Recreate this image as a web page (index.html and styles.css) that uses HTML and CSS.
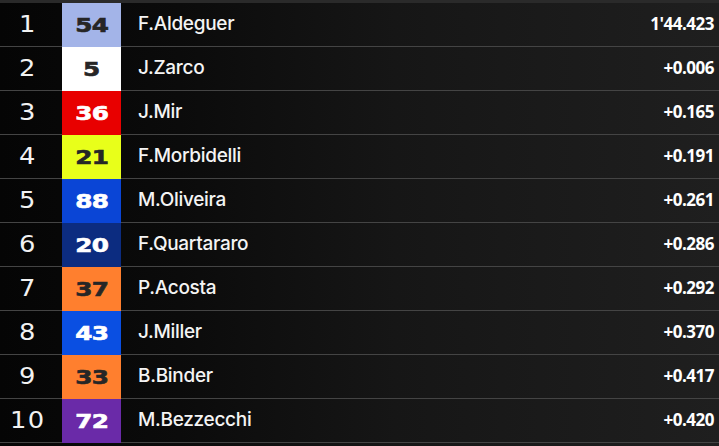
FILE: index.html
```html
<!DOCTYPE html>
<html>
<head>
<meta charset="utf-8">
<link rel="stylesheet" href="styles.css">
</head>
<body>
<div class="board">
  <div class="topbar"></div>
  <div class="row"><div class="pos"><span>1</span></div><div class="num c-lav"><span>54</span></div><div class="name">F.Aldeguer</div><div class="time">1'44.423</div></div>
  <div class="row"><div class="pos"><span>2</span></div><div class="num c-white"><span>5</span></div><div class="name">J.Zarco</div><div class="time">+0.006</div></div>
  <div class="row"><div class="pos"><span>3</span></div><div class="num c-red"><span>36</span></div><div class="name">J.Mir</div><div class="time">+0.165</div></div>
  <div class="row"><div class="pos"><span>4</span></div><div class="num c-yellow"><span>21</span></div><div class="name">F.Morbidelli</div><div class="time">+0.191</div></div>
  <div class="row"><div class="pos"><span>5</span></div><div class="num c-blue"><span>88</span></div><div class="name">M.Oliveira</div><div class="time">+0.261</div></div>
  <div class="row"><div class="pos"><span>6</span></div><div class="num c-navy"><span>20</span></div><div class="name">F.Quartararo</div><div class="time">+0.286</div></div>
  <div class="row"><div class="pos"><span>7</span></div><div class="num c-orange"><span>37</span></div><div class="name">P.Acosta</div><div class="time">+0.292</div></div>
  <div class="row"><div class="pos"><span>8</span></div><div class="num c-blue2"><span>43</span></div><div class="name">J.Miller</div><div class="time">+0.370</div></div>
  <div class="row"><div class="pos"><span>9</span></div><div class="num c-orange"><span>33</span></div><div class="name">B.Binder</div><div class="time">+0.417</div></div>
  <div class="row"><div class="pos"><span>10</span></div><div class="num c-purple"><span>72</span></div><div class="name">M.Bezzecchi</div><div class="time">+0.420</div></div>
</div>
</body>
</html>
```

FILE: styles.css
```css
html, body {
  margin: 0;
  padding: 0;
  background: #111;
}
.board {
  width: 719px;
  height: 446px;
  background: linear-gradient(to right, #050505 0%, #0b0b0b 25%, #161616 55%, #1f1f1f 100%);
  overflow: hidden;
}
.topbar {
  height: 3px;
  background: #2a2a2a;
}
.row {
  display: grid;
  grid-template-columns: 62px 59px 1fr auto;
  height: 43px;
  border-bottom: 1px solid #444;
  align-items: stretch;
}
.pos {
  display: flex;
  align-items: center;
  justify-content: center;
  padding-right: 6px;
  padding-bottom: 2px;
  color: #f2f2f2;
  font-family: "DejaVu Sans", sans-serif;
  font-weight: 400;
  font-size: 23px;
}
.pos span {
  display: inline-block;
  transform: scaleX(1.12);
  letter-spacing: 1px;
}
.num {
  display: flex;
  align-items: center;
  justify-content: center;
  font-family: "DejaVu Sans", sans-serif;
  font-weight: 700;
  font-size: 19px;
  margin-bottom: -1px;
}
.num span {
  display: inline-block;
  transform: scaleX(1.3);
  letter-spacing: -0.5px;
  -webkit-text-stroke: 0.6px currentColor;
}
.name {
  display: flex;
  align-items: center;
  padding-left: 17px;
  padding-bottom: 3px;
  color: #f4f4f4;
  font-family: "Inter", sans-serif;
  font-weight: 500;
  font-size: 19px;
  letter-spacing: -0.3px;
}
.time {
  display: flex;
  align-items: center;
  justify-content: flex-end;
  padding-right: 5px;
  padding-bottom: 2px;
  color: #fff;
  font-family: "Open Sans", sans-serif;
  font-weight: 700;
  font-size: 17px;
  letter-spacing: -0.5px;
}
.c-lav { background: #a3b4e8; color: #262626; }
.c-white { background: #ffffff; color: #262626; }
.c-red { background: #e80000; color: #ffffff; }
.c-yellow { background: #e8ff1a; color: #262626; }
.c-blue { background: #0a45d6; color: #ffffff; }
.c-navy { background: #0c2c80; color: #ffffff; }
.c-orange { background: #ff7f2e; color: #262626; }
.c-blue2 { background: #0a4fe2; color: #ffffff; }
.c-purple { background: #6a2aa8; color: #ffffff; }
```
